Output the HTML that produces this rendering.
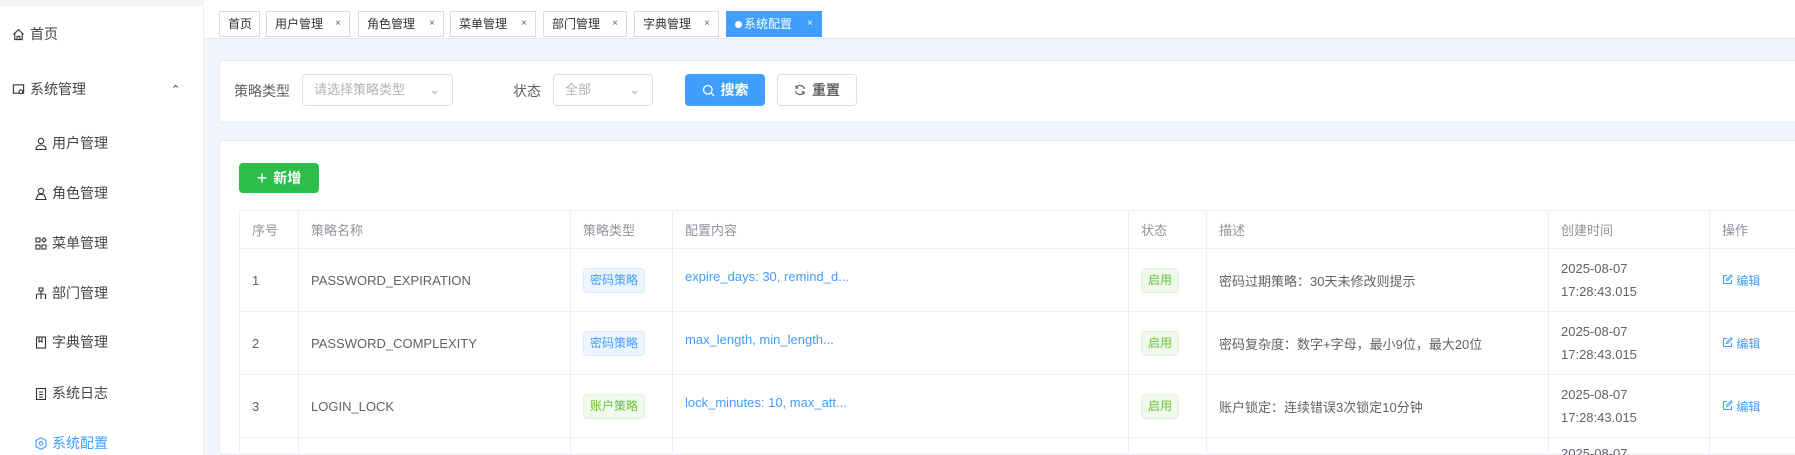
<!DOCTYPE html>
<html style="width:1795px;height:455px;overflow:hidden"><head><meta charset="utf-8"><style>
*{box-sizing:border-box;margin:0;padding:0}
html,body{overflow:hidden}
body{width:1795px;height:455px;overflow:hidden;background:#f2f5fb;font-family:"Liberation Sans","Noto Sans CJK SC",sans-serif;color:#606266}
#root{position:relative;width:1795px;height:455px;overflow:hidden}
.a{position:absolute}
.side{left:0;top:0;width:204px;height:455px;background:#fff;border-right:1px solid #eef0f4}
.mi{position:absolute;font-size:14px;color:#444;font-weight:normal;display:flex;align-items:center;height:20px}
.mi svg{margin-right:5px}
.tabs{left:204px;top:0;width:1591px;height:39px;background:#fff;border-bottom:1px solid #e4e7ed}
.tab{position:absolute;top:11px;height:26px;border:1px solid #d8dce5;background:#fff;font-size:12px;color:#303133;line-height:24px;padding-left:8px}
.tab i{font-style:normal;font-size:10px;color:#666;position:absolute;right:8px;top:0}
.card{background:#fff;border:1px solid #e6ebf2;border-radius:4px}
.lbl{font-size:14px;color:#606266}
.sel{border:1px solid #dcdfe6;border-radius:4px;background:#fff;font-size:13px;color:#b0b3b9;line-height:29px;padding-left:11px}
.btn{border-radius:4px;font-size:14px;display:flex;align-items:center;justify-content:center;font-weight:bold}
table{border-collapse:collapse;font-size:13px;table-layout:fixed}
td,th{border:1px solid #ebeef5;text-align:left;padding-left:12px;font-weight:normal}
th{height:38px;color:#909399;font-size:13px}
td{height:63px;color:#606266}
.tg{display:inline-block;font-size:12px;padding:0 6px;height:25px;line-height:23px;border-radius:4px;border:1px solid}
.tb{background:#ecf5ff;border-color:#d9ecff;color:#409eff}
.tgg{background:#f0f9eb;border-color:#e1f3d8;color:#67c23a}
.lk{color:#409eff}
.ed{color:#409eff;font-size:12px}
.dt{line-height:23px}
</style></head><body><div id="root">
<div class="a side">
<div class="a" style="left:0;top:0;width:204px;height:6px;background:#f3f4f6"></div>
<div class="mi" style="left:12px;top:24px"><svg width="13" height="13" viewBox="0 0 14 14" fill="none" stroke="#333" stroke-width="1.2"><path d="M1.5 7 7 1.8 12.5 7M3 5.8V12.5h8V5.8M5.5 12.5V9h3v3.5"/></svg>首页</div>
<div class="mi" style="left:12px;top:79px"><svg width="13" height="13" viewBox="0 0 14 14" fill="none" stroke="#333" stroke-width="1.2"><rect x="1.5" y="2" width="11" height="9"/><circle cx="9.5" cy="9.5" r="2" fill="#fff"/></svg>系统管理</div>
<div class="a" style="left:171px;top:83px;font-size:11px;color:#333">&#8963;</div>
<div class="mi" style="left:35px;top:133px"><svg width="12" height="13" viewBox="0 0 12 13" fill="none" stroke="#333" stroke-width="1.1"><circle cx="6" cy="4" r="2.7"/><path d="M1 12.5c0-3 2.2-4.5 5-4.5s5 1.5 5 4.5z"/></svg>用户管理</div>
<div class="mi" style="left:35px;top:183px"><svg width="12" height="13" viewBox="0 0 12 13" fill="none" stroke="#333" stroke-width="1.1"><circle cx="6" cy="4" r="2.7"/><path d="M1 12.5 3 7.5h6l2 5z"/></svg>角色管理</div>
<div class="mi" style="left:35px;top:233px"><svg width="12" height="13" viewBox="0 0 12 13" fill="none" stroke="#333" stroke-width="1.1"><rect x="1" y="1" width="4" height="4"/><path d="M9 .8 11.2 3 9 5.2 6.8 3z"/><rect x="1" y="8" width="4" height="4"/><rect x="7" y="8" width="4" height="4"/></svg>菜单管理</div>
<div class="mi" style="left:35px;top:283px"><svg width="12" height="13" viewBox="0 0 12 13" fill="none" stroke="#333" stroke-width="1.1"><rect x="4" y="1" width="4" height="3"/><path d="M6 4v3M2 7h8M1.5 7v5M6 7v5M10.5 7v5"/></svg>部门管理</div>
<div class="mi" style="left:35px;top:332px"><svg width="12" height="13" viewBox="0 0 12 13" fill="none" stroke="#333" stroke-width="1.1"><rect x="1.5" y="1" width="9" height="11"/><path d="M4 1v5l1.5-1L7 6V1"/></svg>字典管理</div>
<div class="mi" style="left:35px;top:383px"><svg width="12" height="13" viewBox="0 0 12 13" fill="none" stroke="#333" stroke-width="1.1"><rect x="1.5" y="1.5" width="9" height="11"/><path d="M4 5h4M4 7.5h4M4 10h4"/></svg>系统日志</div>
<div class="mi" style="left:35px;top:433px;color:#409eff"><svg width="12" height="13" viewBox="0 0 12 13" fill="none" stroke="#409eff" stroke-width="1.1"><path d="M6 .8 11 3.5v6L6 12.2 1 9.5v-6z"/><circle cx="6" cy="6.5" r="1.8"/></svg>系统配置</div>
</div>
<div class="a tabs">
<div class="tab" style="left:15px;width:41px">首页</div>
<div class="tab" style="left:62px;width:84px">用户管理<i>×</i></div>
<div class="tab" style="left:154px;width:86px">角色管理<i>×</i></div>
<div class="tab" style="left:246px;width:86px">菜单管理<i>×</i></div>
<div class="tab" style="left:339px;width:84px">部门管理<i>×</i></div>
<div class="tab" style="left:430px;width:85px">字典管理<i>×</i></div>
<div class="tab" style="left:522px;width:96px;background:#409eff;border-color:#409eff;color:#fff;padding-left:8px"><span style="display:inline-block;width:7px;height:7px;border-radius:50%;background:#fff;margin-right:2px"></span>系统配置<i style="color:#fff">×</i></div>
</div>
<div class="a card" style="left:219px;top:60px;width:1600px;height:63px"></div>
<div class="a lbl" style="left:234px;top:81px">策略类型</div>
<div class="a sel" style="left:302px;top:74px;width:151px;height:32px">请选择策略类型<span style="position:absolute;right:12px;color:#b0b3b9">&#8964;</span></div>
<div class="a lbl" style="left:513px;top:81px">状态</div>
<div class="a sel" style="left:553px;top:74px;width:100px;height:32px">全部<span style="position:absolute;right:12px;color:#b0b3b9">&#8964;</span></div>
<div class="a btn" style="left:685px;top:74px;width:80px;height:32px;background:#409eff;color:#fff"><svg width="13" height="13" viewBox="0 0 13 13" fill="none" stroke="#fff" stroke-width="1.3" style="margin-right:6px"><circle cx="5.8" cy="5.8" r="4.3"/><path d="M9 9l3 3"/></svg>搜索</div>
<div class="a btn" style="left:777px;top:74px;width:80px;height:32px;background:#fff;border:1px solid #dcdfe6;color:#606266"><svg width="12" height="12" viewBox="0 0 12 12" fill="none" stroke="#606266" stroke-width="1.2" style="margin-right:6px"><path d="M10.5 5A4.6 4.6 0 0 0 2 3.8M1.5 7A4.6 4.6 0 0 0 10 8.2M2 1.5v2.5h2.5M10 10.5V8H7.5"/></svg>重置</div>
<div class="a card" style="left:219px;top:140px;width:1600px;height:315px"></div>
<div class="a btn" style="left:239px;top:163px;width:80px;height:30px;background:#2dbd4a;color:#fff"><span style="font-size:18px;font-weight:normal;margin-right:6px">+</span>新增</div>
<table class="a" style="left:239px;top:210px;width:1600px">
<colgroup><col style="width:59px"><col style="width:272px"><col style="width:102px"><col style="width:456px"><col style="width:78px"><col style="width:342px"><col style="width:161px"><col style="width:130px"></colgroup>
<tr><th>序号</th><th>策略名称</th><th>策略类型</th><th>配置内容</th><th>状态</th><th>描述</th><th>创建时间</th><th>操作</th></tr>
<tr><td>1</td><td>PASSWORD_EXPIRATION</td><td><span class="tg tb">密码策略</span></td><td class="lk"><div style="margin-top:-8px">expire_days: 30, remind_d...</div></td><td><span class="tg tgg">启用</span></td><td>密码过期策略：30天未修改则提示</td><td class="dt">2025-08-07<br>17:28:43.015</td><td class="ed"><svg width="11" height="11" viewBox="0 0 11 11" fill="none" stroke="#409eff" stroke-width="1"><path d="M5 1.5H1.5v8h8V6M4.5 6.5l.3-1.5L9 .8l1.2 1.2L6 6.2z"/></svg> 编辑</td></tr>
<tr><td>2</td><td>PASSWORD_COMPLEXITY</td><td><span class="tg tb">密码策略</span></td><td class="lk"><div style="margin-top:-8px">max_length, min_length...</div></td><td><span class="tg tgg">启用</span></td><td>密码复杂度：数字+字母，最小9位，最大20位</td><td class="dt">2025-08-07<br>17:28:43.015</td><td class="ed"><svg width="11" height="11" viewBox="0 0 11 11" fill="none" stroke="#409eff" stroke-width="1"><path d="M5 1.5H1.5v8h8V6M4.5 6.5l.3-1.5L9 .8l1.2 1.2L6 6.2z"/></svg> 编辑</td></tr>
<tr><td>3</td><td>LOGIN_LOCK</td><td><span class="tg tgg">账户策略</span></td><td class="lk"><div style="margin-top:-8px">lock_minutes: 10, max_att...</div></td><td><span class="tg tgg">启用</span></td><td>账户锁定：连续错误3次锁定10分钟</td><td class="dt">2025-08-07<br>17:28:43.015</td><td class="ed"><svg width="11" height="11" viewBox="0 0 11 11" fill="none" stroke="#409eff" stroke-width="1"><path d="M5 1.5H1.5v8h8V6M4.5 6.5l.3-1.5L9 .8l1.2 1.2L6 6.2z"/></svg> 编辑</td></tr>
<tr><td></td><td></td><td></td><td></td><td></td><td></td><td style="vertical-align:top;padding-top:8px">2025-08-07</td><td></td></tr>
</table>
</div></body></html>
